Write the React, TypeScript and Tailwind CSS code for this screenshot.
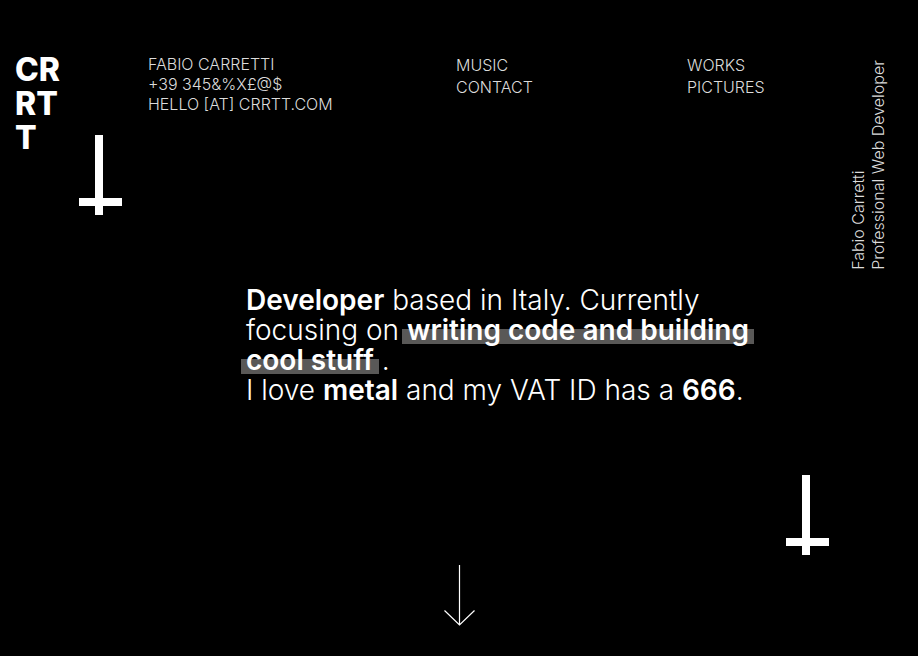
import type { ReactNode } from "react";

function Cross({ className = "" }: { className?: string }) {
  return (
    <svg
      className={`h-20 w-[43px] shrink-0 ${className}`}
      viewBox="0 0 43 80"
      fill="#fff"
      shapeRendering="crispEdges"
      aria-hidden="true"
    >
      <rect x="16" y="0" width="8" height="80" />
      <rect x="0" y="63" width="43" height="8" />
    </svg>
  );
}

function Highlight({ children }: { children: ReactNode }) {
  return (
    <strong className="-mx-[5px] box-decoration-clone bg-[linear-gradient(to_bottom,transparent_16px,#595857_16px,#595857_31px,transparent_31px)] px-[5px] font-semibold">
      {children}
    </strong>
  );
}

function NavColumn({ items }: { items: string[] }) {
  return (
    <ul className="pt-px leading-[22px]">
      {items.map((item) => (
        <li key={item}>
          <a href={`#${item.toLowerCase()}`}>{item}</a>
        </li>
      ))}
    </ul>
  );
}

export default function App() {
  return (
    <div className="flex min-h-screen flex-col bg-black font-['Inter','Liberation_Sans',sans-serif] text-white">
      <header className="grid grid-cols-[133fr_308fr_231fr_161fr_70fr] pt-[53px] pl-[15px] text-[16px] font-light text-[#dcdcdc]">
        <div className="flex">
          <a href="#home" className="w-16 text-[32px] leading-[34px] font-extrabold text-white">
            CR
            <br />
            RT
            <br />T
          </a>
          <Cross className="mt-[82px]" />
        </div>
        <address className="pt-px leading-5 not-italic">
          FABIO CARRETTI
          <br />
          +39 345&amp;%X£@$
          <br />
          HELLO [AT] CRRTT.COM
        </address>
        <NavColumn items={["MUSIC", "CONTACT"]} />
        <NavColumn items={["WORKS", "PICTURES"]} />
        <p className="mb-auto rotate-180 justify-self-start pb-[7px] leading-5 whitespace-nowrap [writing-mode:vertical-rl]">
          Fabio Carretti
          <br />
          Professional Web Developer
        </p>
      </header>

      <main className="flex flex-1 flex-col">
        <div className="mt-[15px] grid grid-cols-[246fr_672fr]">
          <h1 className="col-start-2 text-[28px] leading-[30px] font-light whitespace-nowrap">
            <strong className="font-semibold">Developer</strong> based in Italy. Currently
            <br />
            focusing on{" "}
            <Highlight>
              writing code and building
              <br />
              cool stuff
            </Highlight>{" "}
            .
            <br />
            I love <strong className="font-semibold">metal</strong> and my VAT ID has a{" "}
            <strong className="font-semibold">666</strong>.
          </h1>
        </div>
        <Cross className="mt-[70px] mr-[89px] self-end" />
        <a href="#works" aria-label="Scroll down" className="mx-auto mt-[10px]">
          <svg width="31" height="61" viewBox="0 0 31 61" fill="none" stroke="#fff" strokeWidth="1.2">
            <path d="M15.5 0V60M.5 45.5 15.5 60 30.5 45.5" />
          </svg>
        </a>
      </main>
    </div>
  );
}
